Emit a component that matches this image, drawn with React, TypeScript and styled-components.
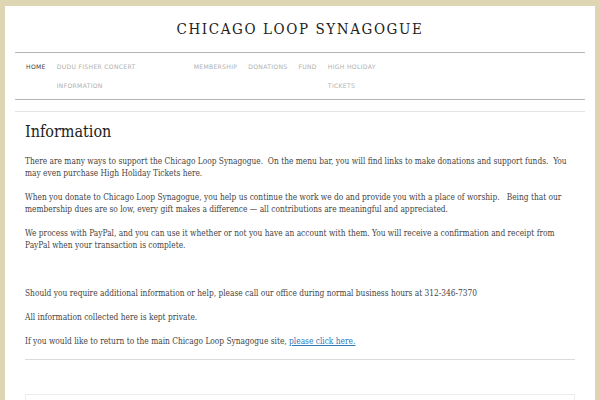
import { createGlobalStyle, styled } from "styled-components";

const navItems = [
  { id: 1, label: "Home", active: true },
  { id: 2, label: "Dudu Fisher Concert Information", width: 126 },
  { id: 3, label: "Membership" },
  { id: 4, label: "Donations" },
  { id: 5, label: "Fund" },
  { id: 6, label: "High Holiday Tickets", width: 56 },
];

export default function App() {
  return (
    <>
      <GlobalStyle />
      <Page>
        <Header>
          <SiteTitle>Chicago Loop Synagogue</SiteTitle>
        </Header>
        <Nav>
          <NavList>
            {navItems.map((item) => (
              <NavItem key={item.id} $active={item.active} $width={item.width}>
                {item.label}
              </NavItem>
            ))}
          </NavList>
        </Nav>
        <Divider />
        <Content>
          <Heading>Information</Heading>
          <p>
            There are many ways to support the Chicago Loop Synagogue.{"\u00a0 "}On the menu
            bar, you will find links to make donations and support funds.{"\u00a0 "}You may
            even purchase High Holiday Tickets here.
          </p>
          <p>
            When you donate to Chicago Loop Synagogue, you help us continue the work we do
            and provide you with a place of worship.{"\u00a0\u00a0 "}Being that our membership
            dues are so low, every gift makes a difference — all contributions are meaningful
            and appreciated.
          </p>
          <p>
            We process with PayPal, and you can use it whether or not you have an account
            with them. You will receive a confirmation and receipt from PayPal when your
            transaction is complete.
          </p>
          <p>{"\u00a0"}</p>
          <p>
            Should you require additional information or help, please call our office during
            normal business hours at 312-346-7370
          </p>
          <p>All information collected here is kept private.</p>
          <p>
            If you would like to return to the main Chicago Loop Synagogue site,{" "}
            <a href="#">please click here.</a>
          </p>
          <ContentRule />
          <FormBox />
        </Content>
      </Page>
    </>
  );
}

const serif = `"DejaVu Serif Condensed", "DejaVu Serif", serif`;

const GlobalStyle = createGlobalStyle`
  html, body {
    margin: 0;
    background: #ded5b3;
  }
  body {
    padding: 6px 5px 0;
    overflow: hidden;
  }
`;

const Page = styled.div`
  background: #fff;
  min-height: 400px;
  padding: 0 10px;
`;

const Header = styled.header`
  height: 46px;
  display: flex;
  align-items: center;
  justify-content: center;
`;

const SiteTitle = styled.h1`
  margin: 0;
  font-family: ${serif};
  font-weight: normal;
  font-size: 15px;
  letter-spacing: 1.6px;
  text-transform: uppercase;
  color: #222;
`;

const Nav = styled.nav`
  border-top: 1px solid #b4b4b4;
  border-bottom: 1px solid #b4b4b4;
  padding: 4px 0 4px 11px;
`;

const NavList = styled.ul`
  display: flex;
  align-items: flex-start;
  gap: 11px;
  list-style: none;
  margin: 0;
  padding: 0;
`;

const NavItem = styled.li<{ $active?: boolean; $width?: number }>`
  font-family: "DejaVu Sans", sans-serif;
  font-size: 6.1px;
  line-height: 19px;
  letter-spacing: 0.3px;
  text-transform: uppercase;
  color: ${({ $active }) => ($active ? "#444" : "#b0b0b0")};
  width: ${({ $width }) => ($width ? `${$width}px` : "auto")};
`;

const Divider = styled.hr`
  margin: 11px 0 0;
  border: none;
  height: 1px;
  background: #e4e4e4;
`;

const Content = styled.main`
  padding: 0 10px;
  font-family: ${serif};
  font-size: 8.3px;
  line-height: 12px;
  color: #444;
  p {
    margin: 0 0 12px;
  }
  a {
    color: #2b79b9;
  }
`;

const Heading = styled.h2`
  margin: 8px 0 11px;
  font-family: ${serif};
  font-weight: normal;
  font-size: 16px;
  line-height: 24px;
  color: #222;
`;

const ContentRule = styled.hr`
  margin: 6px 0 0;
  border: none;
  height: 1px;
  background: #dcdcdc;
`;

const FormBox = styled.div`
  margin-top: 34px;
  height: 40px;
  border: 1px solid #ececec;
`;
